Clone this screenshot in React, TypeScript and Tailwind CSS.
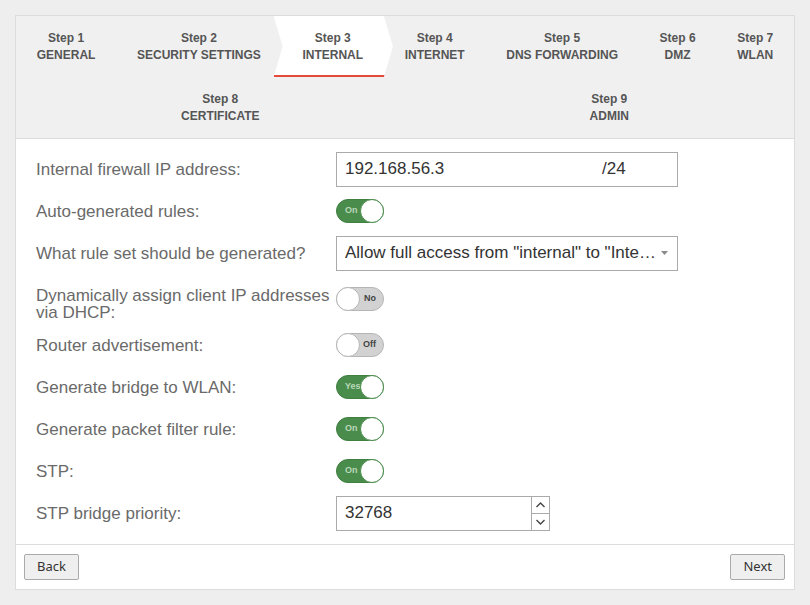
import React from 'react';

const rowOne = [
  { n: 1, title: 'GENERAL' },
  { n: 2, title: 'SECURITY SETTINGS' },
  { n: 3, title: 'INTERNAL', active: true },
  { n: 4, title: 'INTERNET' },
  { n: 5, title: 'DNS FORWARDING' },
  { n: 6, title: 'DMZ' },
  { n: 7, title: 'WLAN' },
];

const rowTwo = [
  { n: 8, title: 'CERTIFICATE' },
  { n: 9, title: 'ADMIN' },
];

type Step = { n: number; title: string; active?: boolean };

const StepItem = ({ step }: { step: Step }) => (
  <div className="relative flex-auto h-[61px] flex flex-col items-center justify-center text-center">
    {step.active && (
      <div className="absolute inset-y-0 -left-2 -right-[9px] bg-white border-b-2 border-[#e5493a] [clip-path:polygon(0_0,calc(100%_-_9px)_0,100%_50%,calc(100%_-_9px)_100%,0_100%,9px_50%)]" />
    )}
    <div className="relative text-[12px] leading-[17px] font-bold text-[#555]">Step {step.n}</div>
    <div className="relative text-[12px] leading-[17px] font-bold text-[#555] whitespace-nowrap">{step.title}</div>
  </div>
);

const Toggle = ({ on, label }: { on: boolean; label: string }) =>
  on ? (
    <div className="relative flex h-6 w-12 items-center justify-end rounded-full border border-[#3f7f40] bg-[#4a8c4b]">
      <span className="absolute left-[8px] top-1/2 -translate-y-1/2 text-[9px] font-bold text-[#bcd8bc]">{label}</span>
      <span className="relative -mr-px h-6 w-6 rounded-full border border-[#4a8c4b] bg-white" />
    </div>
  ) : (
    <div className="relative flex h-6 w-12 items-center justify-start rounded-full border border-[#b5b5b5] bg-[#d2d2d2]">
      <span className="absolute right-[7px] top-1/2 -translate-y-1/2 text-[9px] font-bold text-[#444]">{label}</span>
      <span className="relative -ml-px h-6 w-6 rounded-full border border-[#b5b5b5] bg-white" />
    </div>
  );

const Row = ({ label, children, tall }: { label: string; children: React.ReactNode; tall?: boolean }) => (
  <div className="flex min-h-[42px]">
    <div className="w-[300px] shrink-0 pt-[13px] pb-[3px] leading-[17px] text-[17px] text-[#6a6a6a]">{label}</div>
    <div className={tall ? 'pt-[13px]' : 'flex items-center'}>{children}</div>
  </div>
);

export default function App() {
  return (
    <div className="min-h-screen bg-[#eeeeee] px-[15px] pt-[15px] font-['Liberation_Sans',Arial,sans-serif]">
      <div className="border border-[#dcdcdc] bg-white">
        <div className="bg-[#f0f0f0] border-b border-[#dcdcdc]">
          <div className="flex">
            {rowOne.map((s) => (
              <StepItem key={s.n} step={s} />
            ))}
          </div>
          <div className="flex">
            {rowTwo.map((s) => (
              <StepItem key={s.n} step={s} />
            ))}
          </div>
        </div>

        <div className="px-5 pt-[9px] pb-[10px]">
          <Row label="Internal firewall IP address:">
            <div className="flex h-[35px] w-[342px] items-center border border-[#aaa] text-[17px] text-[#333]">
              <span className="flex-1 pl-2">192.168.56.3</span>
              <span className="w-[75px]">/24</span>
            </div>
          </Row>
          <Row label="Auto-generated rules:">
            <Toggle on label="On" />
          </Row>
          <Row label="What rule set should be generated?">
            <div className="flex h-[35px] w-[342px] items-center border border-[#aaa] text-[17px] text-[#333]">
              <span className="flex-1 truncate pl-2">Allow full access from "internal" to "Internet"</span>
              <svg width="7" height="4" viewBox="0 0 7 4" className="mr-[9px] ml-[4px] shrink-0">
                <polygon points="0,0 7,0 3.5,4" fill="#8a8a8a" />
              </svg>
            </div>
          </Row>
          <Row label="Dynamically assign client IP addresses via DHCP:" tall>
            <Toggle on={false} label="No" />
          </Row>
          <Row label="Router advertisement:">
            <Toggle on={false} label="Off" />
          </Row>
          <Row label="Generate bridge to WLAN:">
            <Toggle on label="Yes" />
          </Row>
          <Row label="Generate packet filter rule:">
            <Toggle on label="On" />
          </Row>
          <Row label="STP:">
            <Toggle on label="On" />
          </Row>
          <Row label="STP bridge priority:">
            <div className="flex h-[35px] w-[214px] border border-[#aaa] text-[17px] text-[#333]">
              <span className="flex flex-1 items-center pl-2">32768</span>
              <div className="flex w-[18px] flex-col border-l border-[#aaa]">
                <div className="flex flex-1 items-center justify-center border-b border-[#aaa]">
                  <svg width="9" height="6" viewBox="0 0 9 6">
                    <polyline points="0.5,5 4.5,1 8.5,5" fill="none" stroke="#444" strokeWidth="1.4" />
                  </svg>
                </div>
                <div className="flex flex-1 items-center justify-center">
                  <svg width="9" height="6" viewBox="0 0 9 6">
                    <polyline points="0.5,1 4.5,5 8.5,1" fill="none" stroke="#444" strokeWidth="1.4" />
                  </svg>
                </div>
              </div>
            </div>
          </Row>
        </div>

        <div className="flex justify-between border-t border-[#dcdcdc] pl-2 pr-[9px] py-[9px] font-['Noto_Sans',sans-serif]">
          <button className="h-[26px] rounded-[2px] border border-[#aaa] bg-[#efefef] px-[12px] text-[13px] text-[#333]">Back</button>
          <button className="h-[26px] rounded-[2px] border border-[#aaa] bg-[#efefef] px-[12px] text-[13px] text-[#333]">Next</button>
        </div>
      </div>
    </div>
  );
}
